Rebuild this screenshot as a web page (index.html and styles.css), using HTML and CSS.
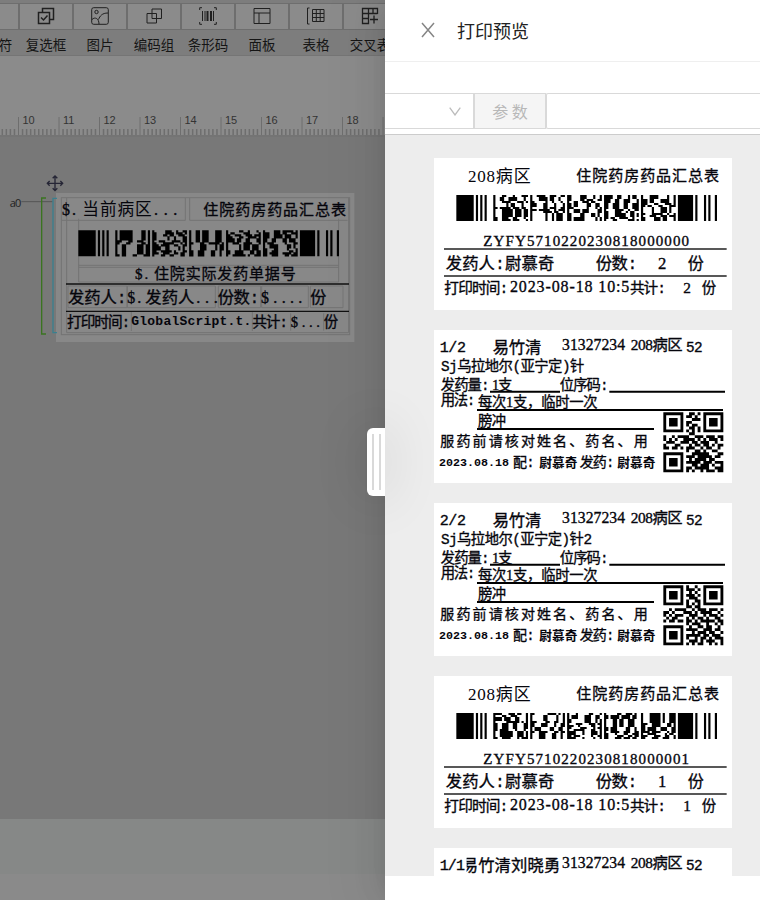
FILE: index.html
```html
<!DOCTYPE html>
<html lang="zh-CN">
<head>
<meta charset="utf-8">
<title>打印预览</title>
<link rel="stylesheet" href="styles.css">
</head>
<body>
<div class="app">
  <section class="designer">
    <div class="toolbar">
      <div class="tool"><div class="tool-icon"><svg viewBox="0 0 18 18"><path d="M14.500 1v15"/></svg></div><span>特殊符</span></div>
      <div class="tool"><div class="tool-icon"><svg viewBox="0 0 18 18"><g stroke-width="1.5"><path d="M5.500 5V1.500h11v11H13M1.500 5.500h11v11h-11z"/><path d="M4 10.500l2.500 2.500 4-4.500"/></g></svg></div><span>复选框</span></div>
      <div class="tool"><div class="tool-icon"><svg viewBox="0 0 18 18"><rect x=".7" y=".7" width="16.600" height="16.600" rx="2"/><circle cx="5.500" cy="5" r="1.700"/><path d="M1 12.500c3-3 7-1 7 4.500M7.500 12.500C9 9 11 6 17 6"/></svg></div><span>图片</span></div>
      <div class="tool"><div class="tool-icon"><svg viewBox="0 0 18 18"><path d="M7 2h9.500v9.500H7zM2 6.500h9.500V16H2z"/></svg></div><span>编码组</span></div>
      <div class="tool"><div class="tool-icon"><svg viewBox="0 0 18 18"><path d="M3 .7H.7V3M15 .7h2.300V3M3 17.300H.7V15M15 17.300h2.300V15M3.500 4v10M6 4v10M8.500 4v10M11.500 4v10M14.500 4v10"/><path stroke-width="2" d="M8.500 4v10M12 4v10"/></svg></div><span>条形码</span></div>
      <div class="tool"><div class="tool-icon"><svg viewBox="0 0 18 18"><path d="M1 1.500h16v15H1zM1 6h16M6 6v10.500"/></svg></div><span>面板</span></div>
      <div class="tool"><div class="tool-icon"><svg viewBox="0 0 18 18"><path d="M2.500 1H.5v16h2M5.500 2.500H17v12H5.500zM5.500 6.500H17M5.500 10.500H17M9.300 2.500v12M13.200 2.500v12"/></svg></div><span>表格</span></div>
      <div class="tool"><div class="tool-icon"><svg viewBox="0 0 18 18"><path stroke-width="1.300" d="M16.500 7V1.500h-15v15h6V1.500M1.500 6.500h15M1.500 11.500h6M12 1.500v5M13 8.500v8M9 12.500h8"/></svg></div><span>交叉表</span></div>
    </div>
    <div class="blank"></div>
    <div class="ruler"><svg id="ruler" width="385" height="22"></svg></div>
    <div class="canvas">
      <svg class="design" viewBox="0 0 1155 540">
        <rect x="168" y="69" width="895" height="447" fill="#888"/>
        <g fill="none" stroke="#747474" stroke-width="3">
          <rect x="184" y="83" width="865" height="411"/>
          <path d="M200 84v404h846V84M185 151h371V84M569 84v67h474M236 146v190h780V146M236 286h780M236 292h780M204 348h177v65H204zM382 348h264v65H382zM655 348h127v65H655zM785 348h140v65H785zM931 348h98v65h-98zM394 425v58M757 425v58M872 430v52M971 430v52"/>
          <path d="M64 95h94" stroke="#555"/>
        </g>
        <path d="M138 84h-13v408h13" fill="none" stroke="#3a7420" stroke-width="4"/>
        <path d="M171 85h-12v403h12" fill="none" stroke="#39808f" stroke-width="4"/>
        <path d="M198 342h849M198 424h849" stroke="#111" stroke-width="4"/>
        <path d="M165 17v46M142 40h46M158 25l7-7 7 7M158 55l7 7 7-7M149 33l-7 7 7 7M181 33l7 7-7 7" fill="none" stroke="#252535" stroke-width="4"/>
        <g class="barcode" data-seed="31" data-x="235" data-y="181"></g>
        <text class="ui" x="29" y="112" font-size="33" textLength="35">a0</text>
        <g class="print">
          <text class="serif" x="188" y="136" font-size="48" textLength="42">$.</text><text class="thin" x="249" y="136" font-size="50" textLength="208">当前病区</text><text class="serif" x="464" y="136" font-size="48" textLength="70">...</text>
          <text x="612" y="136" font-size="45" textLength="428">住院药房药品汇总表</text>
          <text class="serif" x="407" y="328" font-size="45" textLength="40">$.</text><text x="464" y="328" font-size="45" textLength="425">住院实际发药单据号</text>
          <text x="206" y="401" font-size="49" textLength="176">发药人:</text>
          <text class="serif" x="384" y="401" font-size="48" textLength="42">$.</text><text x="438" y="401" font-size="49" textLength="147">发药人</text><text class="serif" x="591" y="401" font-size="48" textLength="64">...</text>
          <text x="655" y="401" font-size="49" textLength="125">份数:</text><text class="serif" x="785" y="401" font-size="48" textLength="124">$....</text><text x="933" y="401" font-size="48">份</text>
          <text x="203" y="473" font-size="44" textLength="190">打印时间:</text>
          <text class="bold" x="396" y="468" font-size="39" textLength="360">GlobalScript.t.</text>
          <text x="759" y="473" font-size="44" textLength="107">共计:</text><text class="serif" x="874" y="473" font-size="44" textLength="88">$...</text><text x="973" y="473" font-size="43">份</text>
        </g>
      </svg>
    </div>
    <div class="status"></div>
    <div class="footer"></div>
  </section>

  <aside class="drawer">
    <div class="handle"><i></i><i></i></div>
    <header class="head">
      <svg width="14" height="16" viewBox="0 0 14 16"><path d="M1 1l12 14M13 1L1 15"/></svg>
      <h1>打印预览</h1>
    </header>
    <div class="controls">
      <div class="select"><svg width="12" height="9" viewBox="0 0 12 9"><path d="M.7.7L6 8 11.300.7"/></svg></div>
      <button class="param" disabled>参 数</button>
      <div class="field"></div>
    </div>
    <main class="preview">
      <svg class="card summary" viewBox="12 24 894 456">
        <g class="barcode" data-seed="7" data-x="79" data-y="135"></g>
        <path class="rule" d="M42 297h848M42 378h848"/>
        <g class="print">
          <text class="serif thin" x="116" y="98" font-size="51" textLength="188">208病区</text>
          <text x="441" y="94" font-size="45" textLength="428">住院药房药品汇总表</text>
          <text class="serif" x="162" y="289" font-size="45" textLength="617">ZYFY5710220230818000000</text>
          <text x="49" y="358" font-size="49" textLength="326">发药人:尉慕奇</text>
          <text x="499" y="358" font-size="49" textLength="125">份数:</text><text class="serif" x="686" y="358" font-size="50">2</text><text x="775" y="358" font-size="48">份</text>
          <text x="45" y="431" font-size="44" textLength="192">打印时间:</text><text class="serif" x="242" y="427" font-size="48" textLength="358">2023-08-18 10:5</text>
          <text x="602" y="431" font-size="44" textLength="108">共计:</text><text class="serif" x="762" y="431" font-size="46">2</text><text x="817" y="431" font-size="43">份</text>
        </g>
      </svg>
      <svg class="card detail" viewBox="12 15 894 459">
        <path class="line" d="M180 200h210M538 200h347M141 255h738M141 312h531"/>
        <g class="qr" data-n="0" data-x="700" data-y="262"></g>
        <g class="print">
          <text x="31" y="82" font-size="45" textLength="79">1/2</text><text x="190" y="85" font-size="49" textLength="146">易竹清</text>
          <text class="serif" x="398" y="76" font-size="47" textLength="189">31327234</text><text class="serif" x="604" y="77" font-size="46" textLength="156">208病区</text><text x="770" y="82" font-size="43" textLength="50">52</text>
          <text x="35" y="140" font-size="43" textLength="430">Sj乌拉地尔(亚宁定)针</text>
          <text x="34" y="197" font-size="43" textLength="147">发药量:</text><text class="serif" x="188" y="196" font-size="43" textLength="61">1支</text><text x="391" y="197" font-size="43" textLength="147">位序码:</text>
          <text x="34" y="243" font-size="43" textLength="104">用法:</text><text class="serif" x="146" y="248" font-size="43" textLength="359">每次1支，临时一次</text>
          <text x="146" y="306" font-size="43" textLength="84">膀冲</text>
          <text x="33" y="366" font-size="42" textLength="622">服药前请核对姓名、药名、用</text>
          <text class="bold" x="29" y="425" font-size="35" textLength="210">2023.08.18</text><text x="251" y="427" font-size="42" textLength="65">配:</text><text class="bold" x="330" y="427" font-size="38" textLength="114">尉慕奇</text>
          <text x="451" y="427" font-size="42" textLength="104">发药:</text><text class="bold" x="564" y="427" font-size="38" textLength="114">尉慕奇</text>
        </g>
      </svg>
      <svg class="card detail" viewBox="12 15 894 459">
        <path class="line" d="M180 200h210M538 200h347M141 255h738M141 312h531"/>
        <g class="qr" data-n="1" data-x="700" data-y="262"></g>
        <g class="print">
          <text x="31" y="82" font-size="45" textLength="79">2/2</text><text x="190" y="85" font-size="49" textLength="146">易竹清</text>
          <text class="serif" x="398" y="76" font-size="47" textLength="189">31327234</text><text class="serif" x="604" y="77" font-size="46" textLength="156">208病区</text><text x="770" y="82" font-size="43" textLength="50">52</text>
          <text x="35" y="140" font-size="43" textLength="453">Sj乌拉地尔(亚宁定)针2</text>
          <text x="34" y="197" font-size="43" textLength="147">发药量:</text><text class="serif" x="188" y="196" font-size="43" textLength="61">1支</text><text x="391" y="197" font-size="43" textLength="147">位序码:</text>
          <text x="34" y="243" font-size="43" textLength="104">用法:</text><text class="serif" x="146" y="248" font-size="43" textLength="359">每次1支，临时一次</text>
          <text x="146" y="306" font-size="43" textLength="84">膀冲</text>
          <text x="33" y="366" font-size="42" textLength="622">服药前请核对姓名、药名、用</text>
          <text class="bold" x="29" y="425" font-size="35" textLength="210">2023.08.18</text><text x="251" y="427" font-size="42" textLength="65">配:</text><text class="bold" x="330" y="427" font-size="38" textLength="114">尉慕奇</text>
          <text x="451" y="427" font-size="42" textLength="104">发药:</text><text class="bold" x="564" y="427" font-size="38" textLength="114">尉慕奇</text>
        </g>
      </svg>
      <svg class="card summary" viewBox="12 24 894 456">
        <g class="barcode" data-seed="19" data-x="79" data-y="135"></g>
        <path class="rule" d="M42 297h848M42 378h848"/>
        <g class="print">
          <text class="serif thin" x="116" y="98" font-size="51" textLength="188">208病区</text>
          <text x="441" y="94" font-size="45" textLength="428">住院药房药品汇总表</text>
          <text class="serif" x="162" y="289" font-size="45" textLength="617">ZYFY5710220230818000001</text>
          <text x="49" y="358" font-size="49" textLength="326">发药人:尉慕奇</text>
          <text x="499" y="358" font-size="49" textLength="125">份数:</text><text class="serif" x="686" y="358" font-size="50">1</text><text x="775" y="358" font-size="48">份</text>
          <text x="45" y="431" font-size="44" textLength="192">打印时间:</text><text class="serif" x="242" y="427" font-size="48" textLength="358">2023-08-18 10:5</text>
          <text x="602" y="431" font-size="44" textLength="108">共计:</text><text class="serif" x="762" y="431" font-size="46">1</text><text x="817" y="431" font-size="43">份</text>
        </g>
      </svg>
      <svg class="card detail" viewBox="12 15 894 459">
        <clipPath id="nameClip"><rect x="112" y="20" width="284" height="80"/></clipPath>
        <g class="print">
          <text x="31" y="82" font-size="45" textLength="76">1/1</text><text clip-path="url(#nameClip)" x="97" y="86" font-size="49" textLength="296">易竹清刘晓勇</text>
          <text class="serif" x="398" y="76" font-size="47" textLength="189">31327234</text><text class="serif" x="604" y="77" font-size="46" textLength="156">208病区</text><text x="770" y="82" font-size="43" textLength="50">52</text>
        </g>
      </svg>
    </main>
  </aside>
</div>
<script src="codes.js"></script>
</body>
</html>
```
FILE: styles.css
```css
* { box-sizing: border-box; }
body { margin: 0; width: 760px; height: 900px; overflow: hidden; font-family: "Noto Sans CJK SC", sans-serif; }
.app { display: flex; height: 900px; }
svg { display: block; }

.designer { width: 385px; overflow: hidden; background: #8b8b8b; display: flex; flex-direction: column; }
.toolbar { display: flex; height: 56px; padding-top: 3px; background: #7d7d7d; border-bottom: 1px solid #757575; margin-left: -35px; width: 450px; flex: none; }
.tool { width: 54px; flex: none; text-align: center; font-size: 13.500px; color: #151515; white-space: nowrap; }
.tool-icon { height: 27px; background: #8b8b8b; border: 1px solid #6e6e6e; display: flex; align-items: center; justify-content: center; }
.tool-icon svg { width: 18px; height: 18px; margin-top: -1px; fill: none; stroke: #202020; stroke-width: 1; }
.tool span { display: block; line-height: 29px; }
.blank { height: 59px; flex: none; }
.ruler { height: 22px; flex: none; border-bottom: 2px solid #747474; }
.ruler line { stroke: #6e6e6e; }
.ruler text { font: 11px "Liberation Sans", sans-serif; fill: #333; }
.canvas { height: 682px; flex: none; padding-top: 33px; background: #787878; }
.design { width: 385px; height: 180px; }
.ui { font-family: "Open Sans", sans-serif; fill: #222; }
.status { height: 55px; flex: none; background: #868887; }
.footer { flex: 1; background: #8a8a8a; }

.drawer { position: relative; width: 375px; background: #fff; box-shadow: -6px 0 16px -8px rgba(0,0,0,.08), -9px 0 28px rgba(0,0,0,.05), -12px 0 48px 16px rgba(0,0,0,.03); }
.handle { position: absolute; left: -18px; top: 428px; width: 18px; height: 68px; background: #fff; border-radius: 6px 0 0 6px; display: flex; gap: 5px; padding: 6px 0 6px 5px; box-shadow: 0 0 50px 8px rgba(0,0,0,.08); }
.handle i { width: 2px; background: #d9d9d9; }
.head { height: 62px; display: flex; align-items: center; gap: 22px; padding: 0 0 2px 36px; border-bottom: 1px solid #efefef; }
.head path { fill: none; stroke: #858585; stroke-width: 1.500; }
.head h1 { margin: 0; font-size: 18px; font-weight: 400; color: #222; }
.controls { display: flex; height: 73px; padding: 31px 0 5px; border-bottom: 1px solid #ccc; }
.select { width: 89px; border: 1px solid #d9d9d9; border-left: 0; display: flex; align-items: center; justify-content: flex-end; padding-right: 12px; }
.select path { fill: none; stroke: #bcbcbc; stroke-width: 1.300; }
.param { width: 72px; padding: 0; border: 1px solid #d9d9d9; background: #f5f5f5; color: #b8b8b8; font: 16px "Noto Sans CJK SC", sans-serif; }
.field { flex: 1; border: 1px solid #d9d9d9; border-right: 0; border-radius: 2px 0 0 2px; }
.preview { height: 741px; overflow: hidden; background: #ededed; padding: 23px 0 0 49px; display: flex; flex-direction: column; gap: 20px; }
.card { width: 298px; flex: none; background: #fff; }
.summary { height: 152px; }
.detail { height: 153px; }
.rule { stroke: #222; stroke-width: 5; }
.line { stroke: #000; stroke-width: 6; }
.print { transform: translate(-2px, -2px); }
.print text { font-family: "Liberation Mono", "Noto Sans CJK SC", monospace; fill: #05050c; stroke: #05050c; stroke-width: 1; white-space: pre; }
.print .serif { font-family: "Liberation Serif", "Noto Sans CJK SC", serif; }
.print .bold { font-weight: 700; stroke: none; }
.print .thin { stroke: none; }
```
FILE: codes.js
```js
const NS = 'http://www.w3.org/2000/svg';
function add(parent, name, attrs, text) {
  const el = document.createElementNS(NS, name);
  for (const k in attrs) el.setAttribute(k, attrs[k]);
  if (text) el.textContent = text;
  parent.appendChild(el);
}

// Ruler: major tick every centimetre, minor tick every millimetre
const ruler = document.getElementById('ruler');
for (let i = -5; i < 92; i++) {
  const x = 18.500 + i * 4.050;
  const major = i % 10 === 0;
  add(ruler, 'line', { x1: x, x2: x, y1: major ? 2 : 14, y2: 20, 'stroke-width': major ? 1 : 1.500 });
  if (major && i < 90) add(ruler, 'text', { x: x + 4, y: 9 }, String(10 + i / 10));
}

// Stacked barcode: 13 rows of 17-module codewords between start and stop bars
document.querySelectorAll('.barcode').forEach(g => {
  let seed = +g.dataset.seed;
  const rnd = () => (seed = (seed * 16807) % 2147483647) / 2147483647;
  for (let i = 0; i < 20; i++) rnd();
  const X = +g.dataset.x, Y = +g.dataset.y, m = 782 / 120, H = 78, h = H / 13;
  let d = '';
  const bar = (c, w, y, hh) => { d += `M${X + c * m} ${Y + y}h${w * m}v${hh}h${-w * m}z`; };
  [[0, 8], [9, 1], [11, 1], [13, 1], [102, 7], [110, 1], [114, 1], [116, 1], [119, 1]].forEach(b => bar(b[0], b[1], 0, H));
  const last = [];
  for (let r = 0; r < 13; r++) {
    for (let c = 0; c < 5; c++) {
      let e = last[c];
      if (!e || rnd() > 0.35) {
        e = [1, 1, 1, 1, 1, 1, 1, 1];
        for (let left = 9; left > 0;) {
          const k = Math.floor(rnd() * rnd() * 8 + rnd() * 3) % 8;
          if (e[k] < 6) { e[k]++; left--; }
        }
      }
      last[c] = e;
      let p = 17 + c * 17;
      e.forEach((w, k) => { if (k % 2 === 0) bar(p, w, r * h, h + .3); p += w; });
    }
  }
  add(g, 'path', { d });
});

const QR = [[
  '111111100110101111111', '100000101101001000001', '101110100011101011101', '101110101100001011101',
  '101110101011001011101', '100000100110101000001', '111111101010101111111', '000000000110000000000',
  '100101111001110111011', '101010011110101011101', '011100111011011100100', '100011000101101101011',
  '110110101110010110010', '000000001001101001100', '111111100011111100011', '100000101110111110110',
  '101110100101111011000', '101110101111101110111', '101110100011011101001', '100000101101111100111', '111111101010010111011'
], [
  '111111101001001111111', '100000101110101000001', '101110100101001011101', '101110101110101011101',
  '101110100111001011101', '100000101001101000001', '111111101010101111111', '000000001101100000000',
  '001011110010111011101', '110100011101011110010', '101011100111001011101', '010110001010110100110',
  '101101101101011111011', '000000001011100100101', '111111100100110110010', '100000101111001110110',
  '101110100010111011001', '101110101111101101110', '101110101001011010111', '100000100111010111001', '111111101010110010101'
]];
document.querySelectorAll('.qr').forEach(g => {
  const X = +g.dataset.x, Y = +g.dataset.y, m = 180 / 21;
  let d = '';
  QR[+g.dataset.n].forEach((row, r) => [...row].forEach((v, c) => {
    if (v === '1') d += `M${X + c * m} ${Y + r * m}h${m}v${m}h${-m}z`;
  }));
  add(g, 'path', { d });
});
```
